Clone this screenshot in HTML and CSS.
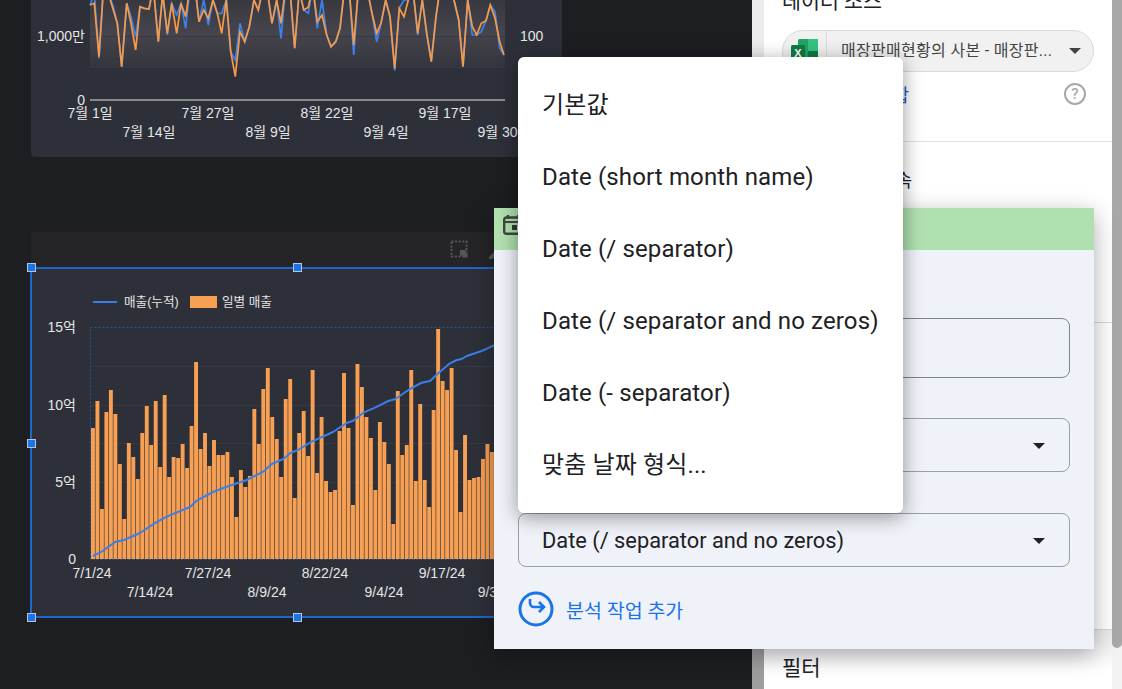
FILE: index.html
```html
<!DOCTYPE html>
<html lang="ko">
<head>
<meta charset="utf-8">
<title>차트 편집</title>
<link rel="stylesheet" href="styles.css">
</head>
<body>
<div class="app">
  <main class="canvas">
    <section class="card card-top">
      <svg id="lineChart" class="chart" width="531" height="157" viewBox="31 0 531 157">
        <defs>
          <linearGradient id="plotFill" x1="0" y1="0" x2="0" y2="1">
            <stop offset="0" stop-color="#38383f"/>
            <stop offset="0.5" stop-color="#46454d"/>
            <stop offset="1" stop-color="#34353c"/>
          </linearGradient>
        </defs>
        <rect x="90" y="0" width="415" height="67" fill="url(#plotFill)"/>
        <g class="grid"><line x1="90" x2="505" y1="3.5" y2="3.5"/><line x1="90" x2="505" y1="36.5" y2="36.5"/><line x1="90" x2="505" y1="67.5" y2="67.5"/></g>
        <g id="lineSeries"></g>
        <line class="axis" x1="90" x2="505" y1="100" y2="100"/>
        <g class="labels">
          <text x="85" y="41" text-anchor="end">1,000만</text>
          <text x="85" y="105" text-anchor="end">0</text>
          <text x="520" y="41">100</text>
          <text x="90" y="118" text-anchor="middle">7월 1일</text>
          <text x="149" y="137" text-anchor="middle">7월 14일</text>
          <text x="208" y="118" text-anchor="middle">7월 27일</text>
          <text x="268" y="137" text-anchor="middle">8월 9일</text>
          <text x="327" y="118" text-anchor="middle">8월 22일</text>
          <text x="386" y="137" text-anchor="middle">9월 4일</text>
          <text x="445" y="118" text-anchor="middle">9월 17일</text>
          <text x="504" y="137" text-anchor="middle">9월 30일</text>
        </g>
      </svg>
    </section>

    <div class="chart-toolbar">
      <svg class="tool" width="20" height="20" viewBox="0 0 20 20"><rect x="1.5" y="1.5" width="15" height="15" fill="none" stroke="#55565a" stroke-width="2" stroke-dasharray="2 1.6"/><path d="M10 10h7l-2 2 3 3-3 3-3-3-2 2z" fill="#55565a"/></svg>
      <svg class="tool" width="20" height="20" viewBox="0 0 20 20"><path d="M2 17 12 7l3 3-10 9H2z" fill="#55565a"/></svg>
    </div>

    <section class="card card-bottom">
      <svg id="comboChart" class="chart" width="722" height="349" viewBox="30 268 722 349">
        <g class="grid"><line x1="91" x2="720" y1="366.5" y2="366.5"/><line x1="91" x2="720" y1="405.5" y2="405.5"/><line x1="91" x2="720" y1="443.5" y2="443.5"/><line x1="91" x2="720" y1="482.5" y2="482.5"/><line x1="91" x2="720" y1="520.5" y2="520.5"/></g>
        <g id="bars"></g>
        <rect class="plot-frame" x="90.5" y="327.5" width="600" height="232"/>
        <path id="cumLine" class="cum-line"/>
        <g class="legend">
          <line x1="93" x2="117" y1="302" y2="302" class="legend-line"/>
          <text x="124" y="306">매출(누적)</text>
          <rect x="190" y="296" width="27" height="12" fill="#f79f52"/>
          <text x="222" y="306">일별 매출</text>
        </g>
        <g class="labels">
          <text x="76" y="332" text-anchor="end">15억</text>
          <text x="76" y="410" text-anchor="end">10억</text>
          <text x="76" y="487" text-anchor="end">5억</text>
          <text x="76" y="564" text-anchor="end">0</text>
          <text x="92" y="578" text-anchor="middle">7/1/24</text>
          <text x="150" y="597" text-anchor="middle">7/14/24</text>
          <text x="208" y="578" text-anchor="middle">7/27/24</text>
          <text x="267" y="597" text-anchor="middle">8/9/24</text>
          <text x="325" y="578" text-anchor="middle">8/22/24</text>
          <text x="384" y="597" text-anchor="middle">9/4/24</text>
          <text x="442" y="578" text-anchor="middle">9/17/24</text>
          <text x="501" y="597" text-anchor="middle">9/30/24</text>
        </g>
      </svg>
      <span class="handle h-tl"></span>
      <span class="handle h-tm"></span>
      <span class="handle h-ml"></span>
      <span class="handle h-bl"></span>
      <span class="handle h-bm"></span>
    </section>
  </main>

  <div class="track-left"></div>

  <aside class="panel">
    <div class="panel-top">
      <h2 class="panel-title">데이터 소스</h2>
      <div class="source-pill">
        <svg class="excel" width="28" height="25" viewBox="0 0 28 25">
          <rect x="7" y="0" width="20" height="25" rx="1.5" fill="#21a366"/>
          <rect x="17" y="0" width="10" height="12" fill="#33c481"/>
          <rect x="17" y="12" width="10" height="13" fill="#107c41"/>
          <rect x="0" y="6" width="14" height="15" rx="1.5" fill="#107c41"/>
          <text x="7" y="18" text-anchor="middle" class="excel-x">X</text>
        </svg>
        <span class="source-name">매장판매현황의 사본 - 매장판...</span>
        <span class="pill-caret"></span>
      </div>
      <div class="blend-row">
        <span class="blend-link">데이터 혼합</span>
        <svg class="help" width="24" height="24" viewBox="0 0 24 24"><circle cx="12" cy="12" r="10" fill="none" stroke="#a8a8a8" stroke-width="2"/><text x="12" y="17" text-anchor="middle" class="help-q">?</text></svg>
      </div>
    </div>
    <div class="panel-section-a"><span class="section-label">측정기준 속</span></div>
    <div class="panel-section-b"></div>
    <div class="panel-section-c"></div>
    <div class="panel-filter"><span class="filter-label">필터</span></div>
  </aside>

  <div class="track-right"><div class="thumb"></div></div>
</div>

<div class="dialog">
  <div class="dialog-head">
    <svg width="20" height="20" viewBox="0 0 20 20"><path d="M5 0v4M15 0v4" stroke="#3d4a3f" stroke-width="2.400" fill="none"/><rect x="1.200" y="2.500" width="17.600" height="16.300" rx="2" fill="none" stroke="#3d4a3f" stroke-width="2.400"/><path d="M2 7h16" stroke="#3d4a3f" stroke-width="2"/><rect x="9" y="10" width="5" height="5" fill="#2f3a31"/></svg>
  </div>
  <div class="dialog-body">
    <div class="field field-a"></div>
    <div class="field field-b"><span class="caret"></span></div>
    <div class="field field-c"><span class="field-text">Date (/ separator and no zeros)</span><span class="caret"></span></div>
    <div class="add-row">
      <svg width="36" height="36" viewBox="0 0 36 36"><circle cx="18" cy="18" r="16" fill="none" stroke="#1a73e8" stroke-width="3"/><path d="M12 8v4a4 4 0 0 0 4 4h10M21 11l5 5-5 5" fill="none" stroke="#1a73e8" stroke-width="2.600"/></svg>
      <span class="add-text">분석 작업 추가</span>
    </div>
  </div>
</div>

<ul class="menu">
  <li>기본값</li>
  <li>Date (short month name)</li>
  <li>Date (/ separator)</li>
  <li>Date (/ separator and no zeros)</li>
  <li>Date (- separator)</li>
  <li>맞춤 날짜 형식...</li>
</ul>
<script src="chart.js"></script>
</body>
</html>
```
FILE: styles.css
```css
* { box-sizing: border-box; }
html, body { margin: 0; height: 100%; overflow: hidden; }
body {
  width: 1122px;
  height: 689px;
  position: relative;
  font-family: Roboto, "Noto Sans CJK KR", sans-serif;
  color: #202124;
  background: #fff;
}
.app {
  display: grid;
  grid-template-columns: 752px 12px 348px 10px;
  height: 689px;
}

/* report canvas */
.canvas { position: relative; background: #1d1e21; overflow: hidden; }
.card { position: absolute; background: #2d3039; }
.card-top { left: 31px; top: 0; width: 531px; height: 157px; border-radius: 0 0 4px 4px; }
.chart-toolbar {
  position: absolute; left: 31px; top: 232px; width: 721px; height: 36px;
  background: #252527;
  display: flex; gap: 17px; align-items: center; padding-left: 419px;
}
.card-bottom { left: 30px; top: 268px; width: 722px; height: 350px; }
.card-bottom::before {
  content: ""; position: absolute; inset: -1px 0 0 0; border: 2px solid #1f66cc; pointer-events: none;
}
.chart { display: block; }
.chart text { font-family: "Liberation Sans", "Noto Sans CJK KR", sans-serif; }
.grid line { stroke: #383a43; stroke-width: 1; }
.axis { stroke: #8a8a8a; stroke-width: 2; }
.labels text { font-size: 14px; fill: #e6e6e6; }
.legend text { font-size: 12.6px; fill: #e6e6e6; }
.legend-line { stroke: #3b7ee8; stroke-width: 2; }
.plot-frame { fill: none; stroke: #24589c; stroke-width: 1; stroke-dasharray: 2 2; }
.cum-line { fill: none; stroke: #3b7ee8; stroke-width: 2; stroke-linejoin: round; }
.bar { fill: #f79f52; }
.s-blue, .s-orange { fill: none; stroke-width: 1.7; stroke-linejoin: miter; }
.s-blue { stroke: #3b82ee; }
.s-orange { stroke: #f79a48; }
.handle {
  position: absolute; width: 9px; height: 9px;
  background: #1a73e8; border: 1px solid #b9c6da;
}
.h-tl { left: -3px; top: -5px; }
.h-tm { left: 263px; top: -5px; }
.h-ml { left: -3px; top: 171px; }
.h-bl { left: -3px; top: 345px; }
.h-bm { left: 263px; top: 345px; }

/* side panel */
.track-left { background: linear-gradient(#ebebeb 0, #ebebeb 620px, #9e9e9e 640px); }
.panel { background: #fff; overflow: hidden; display: flex; flex-direction: column; }
.panel-top { height: 142px; padding: 0 18px; border-bottom: 1px solid #e0e0e0; }
.panel-title { margin: -12px 0 0; font-size: 20.6px; line-height: 28px; font-weight: 400; color: #202124; }
.source-pill {
  margin-top: 14px; width: 312px; height: 42px;
  display: flex; align-items: center;
  background: #f1f1f1; border: 1px solid #dadada; border-radius: 21px;
  padding-left: 8px;
}
.excel { flex: none; margin-right: 7px; }
.excel-x { font: 700 11px "Liberation Sans", sans-serif; fill: #fff; }
.source-name {
  border-left: 1px solid #dadada; height: 40px; line-height: 40px; padding-left: 14px;
  font-size: 16px; letter-spacing: .3px; color: #444; white-space: nowrap; flex: 1;
}
.pill-caret {
  width: 0; height: 0; margin-right: 12px;
  border-left: 6px solid transparent; border-right: 6px solid transparent; border-top: 6px solid #444;
}
.blend-row { display: flex; justify-content: space-between; align-items: center; margin-top: 9px; width: 312px; padding-right: 7px; }
.blend-link { width: 127px; text-align: right; font-size: 18px; color: #1a56c4; white-space: nowrap; }
.help { display: block; }
.help-q { font: 500 15px Roboto, sans-serif; fill: #a8a8a8; }
.panel-section-a { height: 181px; padding: 24px 18px 0; border-bottom: 1px solid #d8d8d8; }
.section-label { display: block; width: 130px; text-align: right; font-size: 18px; color: #202124; white-space: nowrap; }
.panel-section-b { height: 153px; }
.panel-section-c { height: 154px; border-bottom: 1px solid #d8d8d8; }
.panel-filter { padding: 21px 18px 0; background: linear-gradient(#e9e9e9, #fff 40px); flex: 1; }
.filter-label { font-size: 21px; color: #202124; }
.track-right { background: #f3f3f3; }
.thumb { height: 648px; background: #a8a8a8; border-radius: 0 0 5px 5px; }

/* dialog + menu overlays */
.dialog {
  position: absolute; left: 494px; top: 208px; width: 600px; height: 441px;
  background: #eff2f8;
  box-shadow: 0 6px 22px rgba(0,0,0,.32);
}
.dialog-head { height: 42px; background: #b0e0b0; padding: 7px 0 0 9px; }
.dialog-head svg { display: block; }
.dialog-body { padding: 68px 24px 0; }
.field {
  position: relative; height: 54px; width: 552px;
  border: 1px solid #9aa0a6; border-radius: 8px;
  display: flex; align-items: center; padding-left: 23px;
}
.field-a { height: 60px; border-color: #80868b; }
.field-b { margin-top: 40px; }
.field-c { margin-top: 41px; }
.field-text { font-size: 21.8px; color: #202124; white-space: nowrap; }
.caret {
  position: absolute; right: 24px; top: 24px;
  border-left: 6px solid transparent; border-right: 6px solid transparent; border-top: 6px solid #202124;
}
.add-row { display: flex; align-items: center; gap: 12px; margin-top: 24px; }
.add-row svg { display: block; }
.add-text { font-size: 19.5px; color: #1a73e8; }
.menu {
  position: absolute; left: 518px; top: 57px; width: 385px; height: 456px;
  margin: 0; padding: 12px 0 12px; list-style: none;
  background: #fff; border-radius: 6px;
  box-shadow: 0 4px 20px rgba(0,0,0,.4);
}
.menu li {
  height: 72px; line-height: 72px; padding-left: 24px;
  font-size: 24px; letter-spacing: .13px; color: #202124; white-space: nowrap;
}
```
FILE: chart.js
```js
var NS = "http://www.w3.org/2000/svg";
var tops = [428,401,509,412,390,414,464,519,443,457,479,433,406,445,401,467,395,477,457,458,444,468,426,362,449,433,466,440,455,455,452,477,517,470,487,476,409,444,389,368,417,439,477,399,379,498,433,411,456,370,473,417,481,492,490,431,373,428,505,364,387,417,438,490,422,442,464,524,391,455,445,370,481,404,480,507,410,329,381,390,368,450,512,435,480,478,477,459,444,452];
var bars = document.getElementById("bars");
tops.forEach(function (y, i) {
  var r = document.createElementNS(NS, "rect");
  r.setAttribute("class", "bar");
  r.setAttribute("x", (91 + 4.483 * i).toFixed(2));
  r.setAttribute("y", y);
  r.setAttribute("width", 3.9);
  r.setAttribute("height", 559 - y);
  bars.appendChild(r);
});

var cum = [[93,556],[101.7,551.7],[115,542],[124,540],[140,533],[155,523],[166.7,516.7],[190,507],[196.7,500.7],[213,492],[226.7,486.7],[246.7,480],[263.3,471.7],[271.7,464],[283.3,459],[290.7,452.7],[298,450],[311.7,441.700],[333,432],[347.3,422.7],[353.3,420.7],[363.3,412.7],[375,407.7],[388.3,401],[395,399.3],[410,389],[421.7,382.7],[430,381],[438.3,373.3],[450,363.3],[456.7,360],[461.7,359],[466.7,356],[481.7,351],[493.3,345.7],[520,335]];
document.getElementById("cumLine").setAttribute("d", "M" + cum.map(function (p) { return p.join(" "); }).join("L"));

/* zoomed x-coordinates / y-coordinates (3x) of the daily series in the top chart */
var orange = [[270,15],[283,10],[297,170],[310,-30],[325,-20],[340,30],[352,70],[365,200],[380,10],[393,70],[407,150],[420,20],[433,25],[447,27],[460,-40],[475,125],[488,-20],[502,100],[515,10],[530,100],[543,10],[557,50],[570,-40],[585,-40],[597,65],[611,30],[625,55],[639,0],[652,40],[665,100],[679,0],[692,155],[706,230],[720,95],[734,125],[748,80],[762,0],[775,30],[790,-40],[803,-20],[816,70],[830,0],[843,70],[857,-40],[870,-30],[884,145],[898,-30],[911,30],[925,22],[938,-40],[952,65],[966,45],[980,105],[993,140],[1007,125],[1020,85],[1034,-40],[1047,-40],[1061,135],[1075,-30],[1089,-40],[1102,-30],[1116,40],[1130,100],[1143,70],[1157,0],[1170,50],[1184,205],[1198,25],[1212,50],[1225,0],[1239,-30],[1253,100],[1267,0],[1280,100],[1294,185],[1308,50],[1321,-40],[1335,-40],[1349,-40],[1362,0],[1376,60],[1389,200],[1403,0],[1417,80],[1430,105],[1444,70],[1458,62],[1471,15],[1485,55],[1499,125],[1512,165]];
var blueY = {283:-20,297:175,340:20,393:50,407:110,502:105,530:45,557:85,611:0,625:75,665:40,706:180,720:70,843:115,925:40,952:85,966:0,1061:165,1130:125,1184:212,1212:0,1253:105,1417:105,1444:95,1485:35,1499:145};
function seriesPath(pts, over) {
  return "M" + pts.map(function (p) {
    var y = over && over[p[0]] !== undefined ? over[p[0]] : p[1];
    return (p[0] / 3).toFixed(1) + " " + (y / 3).toFixed(1);
  }).join("L");
}
var group = document.getElementById("lineSeries");
[["s-blue", blueY], ["s-orange", null]].forEach(function (s) {
  var p = document.createElementNS(NS, "path");
  p.setAttribute("class", s[0]);
  p.setAttribute("d", seriesPath(orange, s[1]));
  group.appendChild(p);
});
```
